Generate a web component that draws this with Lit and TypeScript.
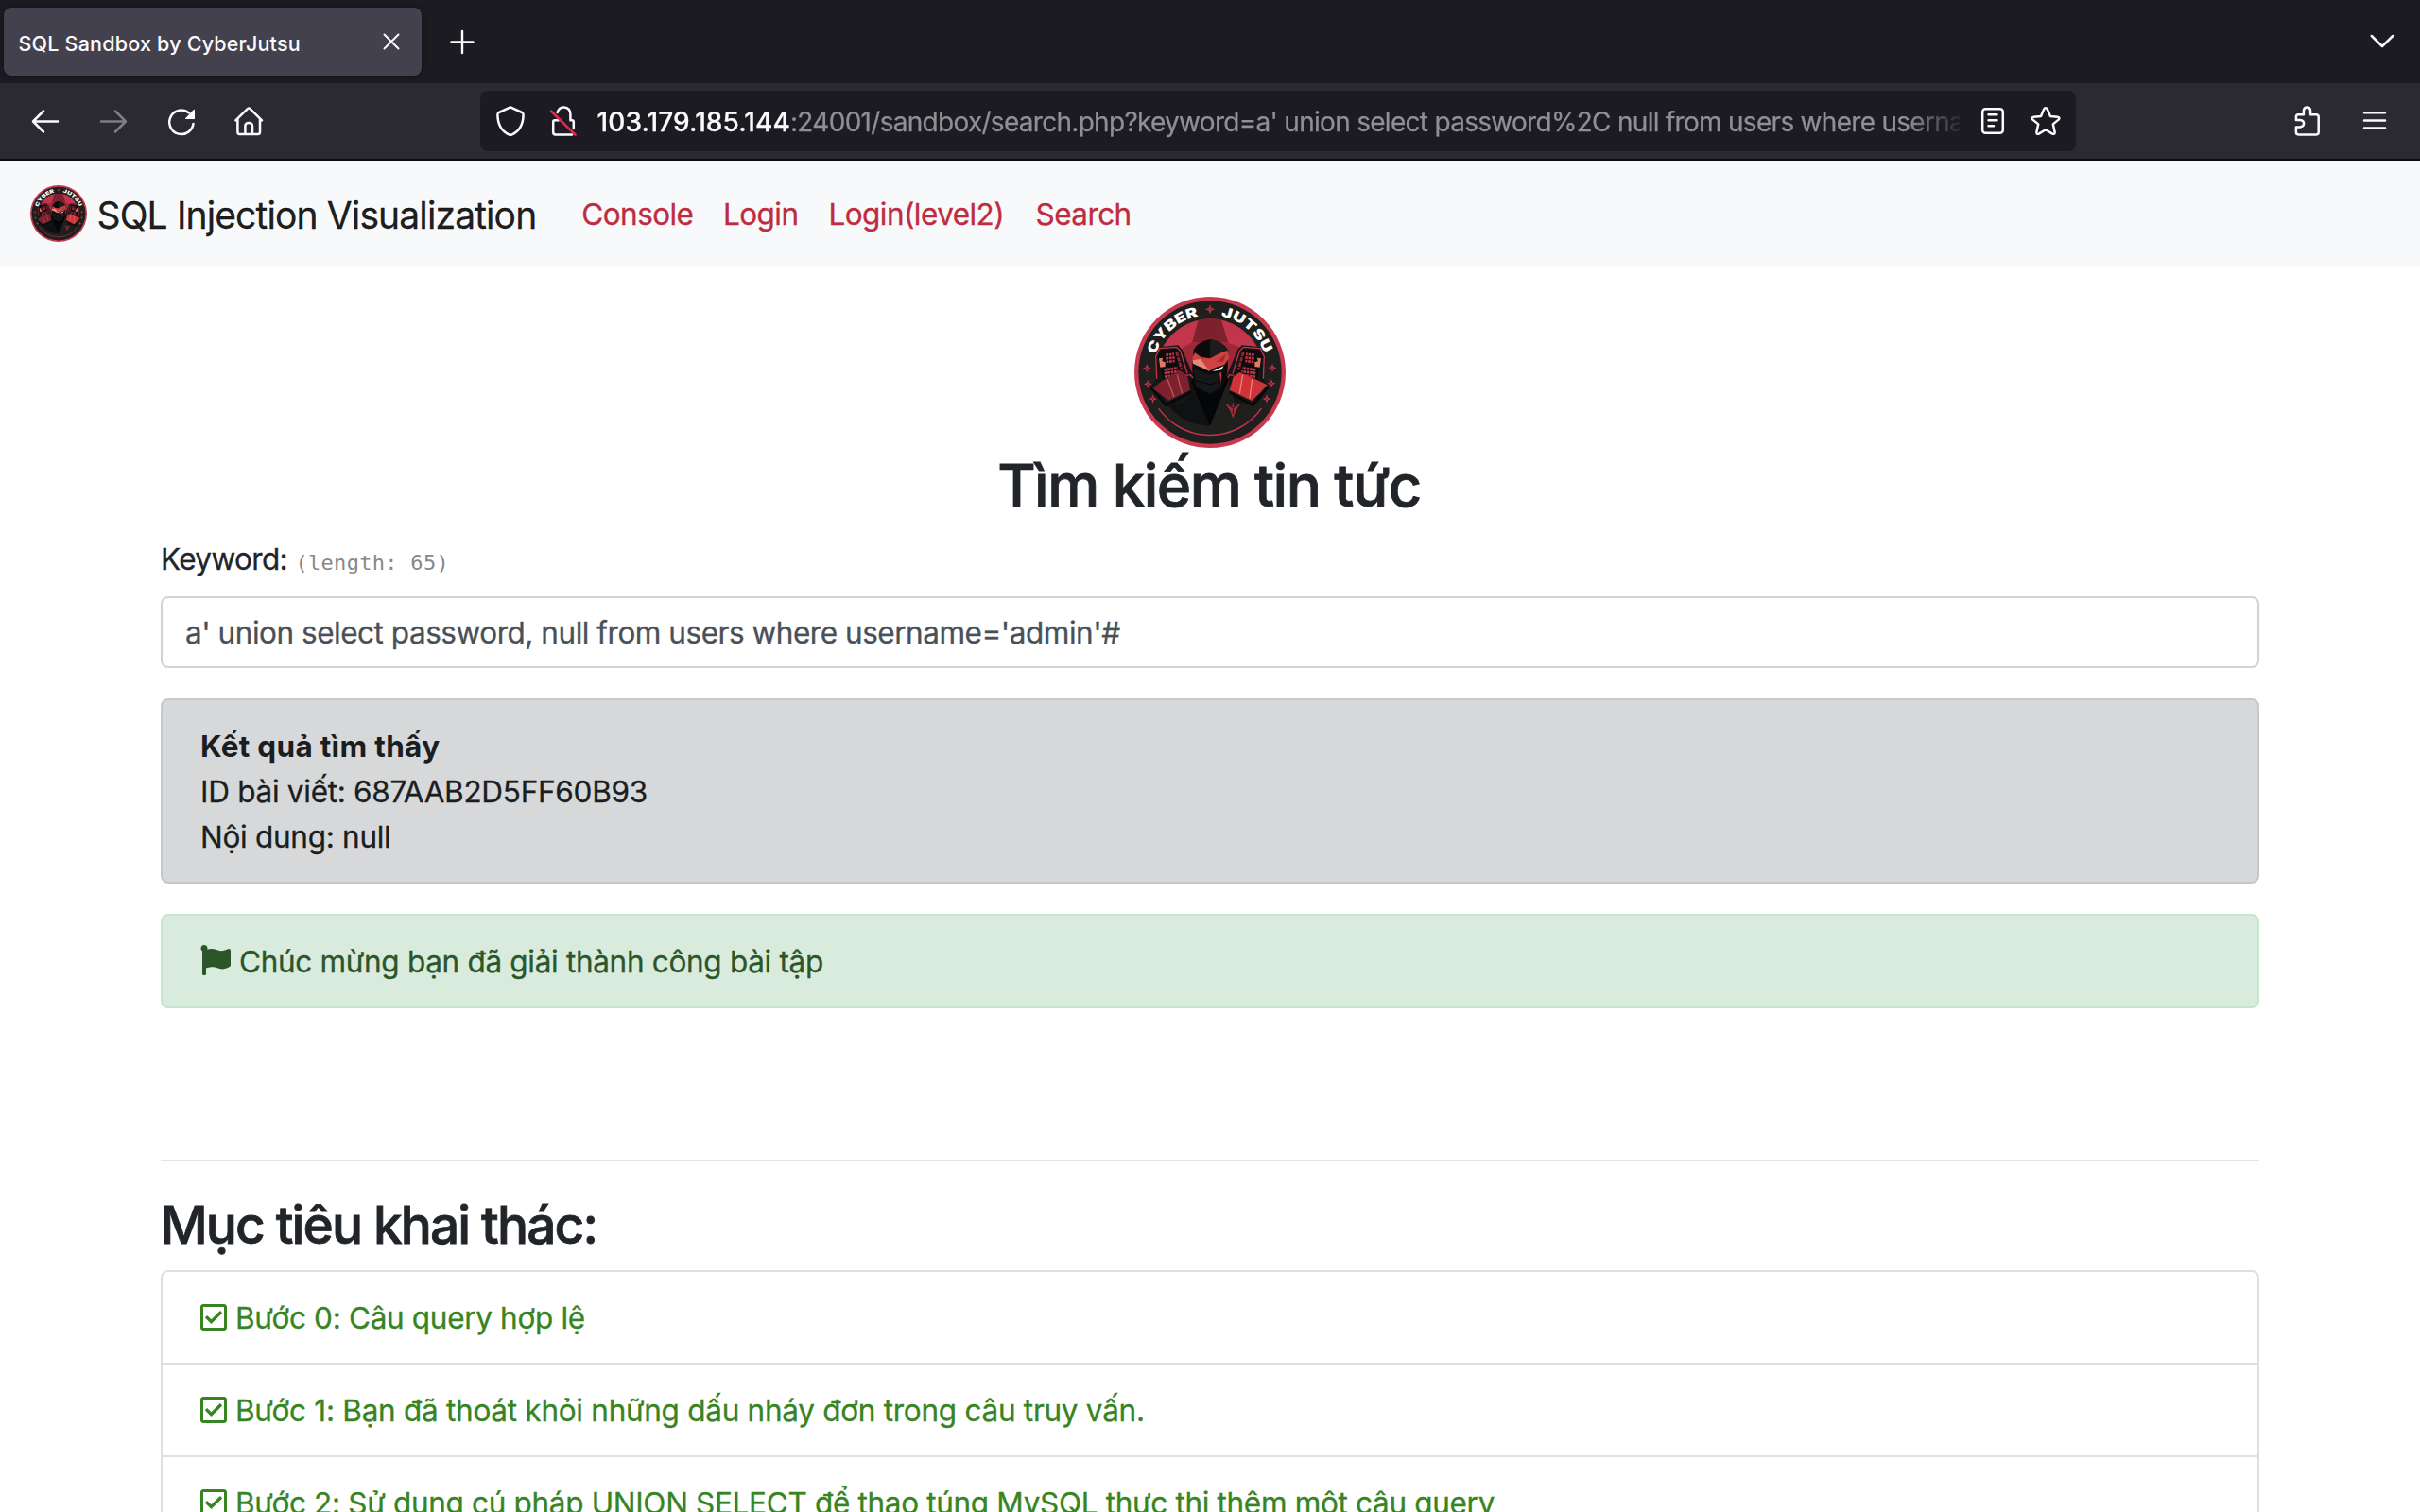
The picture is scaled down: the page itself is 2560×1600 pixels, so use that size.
import { LitElement, html, svg, css } from "lit";
import { customElement } from "lit/decorators.js";

const star4 = (x: number, y: number, r: number) => {
  const k = r * 0.26;
  return `M${x} ${y - r}L${x + k} ${y - k}L${x + r} ${y}L${x + k} ${y + k}L${x} ${y + r}L${x - k} ${y + k}L${x - r} ${y}L${x - k} ${y - k}Z`;
};

const STARS: [number, number, number][] = [
  [300, 82, 15], [100, 269, 14], [103, 319, 14], [119, 366, 14],
  [498, 268, 14], [495, 317, 14], [480, 366, 14],
];

@customElement("cyber-logo")
export class CyberLogo extends LitElement {
  static styles = css`
    :host { display: block; }
    svg { display: block; width: 100%; height: 100%; }
    .ring { font: 900 43px Inter, "Liberation Sans", sans-serif; letter-spacing: 0; fill: #fff; }
  `;

  private tablet() {
    return svg`
      <path d="M124 232 L137 202 L199 196 L212 210 L246 290 L222 378 L158 388 L112 330 L132 300 Z" fill="#151515"/>
      <path d="M131 302 L128 232 L140 206 L194 202 L206 214 L228 286" fill="none" stroke="#c2334a" stroke-width="4"/>
      <path d="M134 234 L144 212 L192 208 L213 276 L206 300 L152 306 Z" fill="#0c0c0c"/>
      <g fill="none" stroke="#c2334a" stroke-width="8" stroke-dasharray="8 2.5">
        <path d="M160 227 L186 224"/><path d="M160 238 L188 235"/><path d="M161 249 L188 246"/>
        <path d="M155 274 L198 268"/><path d="M155 285 L200 279"/><path d="M156 296 L202 290"/>
      </g>
      <path d="M194 218 L210 274" stroke="#8f2433" stroke-width="8" stroke-dasharray="14 3"/>
      <path d="M138 238 L150 236 L148 247 L158 250 L158 264 L142 266 Z" fill="#dd7a68"/>
    `;
  }

  render() {
    return html`
      <svg viewBox="60 42 480 480" role="img" aria-label="CyberJutsu">
        <defs>
          <path id="left" d="M126.9 225.8 A182 182 0 0 1 265.3 103.3"/>
          <path id="right" d="M334.7 103.3 A182 182 0 0 1 473.1 225.8"/>
          <clipPath id="disc"><circle cx="300" cy="282" r="170"/></clipPath>
        </defs>
        <circle cx="300" cy="282" r="240" fill="#c8394f"/>
        <circle cx="300" cy="282" r="227" fill="#1f1f1d"/>
        <g clip-path="url(#disc)">
          <rect x="130" y="112" width="340" height="200" fill="#c2354b"/>
          <path d="M264 110 H334 L366 215 L300 240 L236 215 Z" fill="#7c212d"/>
          <path d="M246 186 L212 204 L236 300 H364 L400 204 L352 186 Z" fill="#9c2838"/>
          <path d="M130 300 L236 280 L300 452 L180 500 L130 420 Z" fill="#0f1113"/>
          <path d="M470 300 L364 280 L300 452 L400 480 L470 420 Z" fill="#1f1f1d"/>
        </g>
        <path d="M232 286 L300 330 L366 286 L352 322 L300 453 L252 340 Z" fill="#050607"/>
        <path d="M300 177 Q262 184 248 210 L244 262 Q242 310 256 332 L298 354 L338 336 Q358 300 356 250 L358 212 Q342 184 300 177 Z" fill="#0b0b0c"/>
        <path d="M300 177 Q342 184 356 212 L300 238 Z" fill="#1c1c1d"/>
        <path d="M248 270 L300 290 L340 278 L334 330 L300 350 L256 328 Z" fill="#161719"/>
        <path d="M250 308 L300 320 L336 308" fill="none" stroke="#050607" stroke-width="3"/>
        <path d="M252 220 L272 234 L300 238 L330 222 L356 212 L360 238 L346 258 L318 266 L298 278 L246 254 L244 236 Z" fill="#d0423f"/>
        <path d="M245 244 L270 240 L298 278 L246 254 Z" fill="#e58c78"/>
        <path d="M318 250 L352 222 L342 248 Z" fill="#a82c30"/>
        <path d="M306 280 L344 262 L336 274 Z" fill="#fff"/>
        <path d="M330 284 L336 282 L336 318 Z" fill="#c2334a"/>
        ${this.tablet()}
        <g transform="translate(600 0) scale(-1 1)">${this.tablet()}</g>
        <path d="M118 332 L152 306 L204 276 L228 292 L238 338 L168 372 Z" fill="#7c212d"/>
        <path d="M482 322 L444 304 L394 282 L374 296 L362 338 L432 372 L458 348 Z" fill="#cf3238"/>
        <path d="M165 304 L186 360 M196 290 L212 350" stroke="#bd5a53" stroke-width="4"/>
        <path d="M434 304 L426 364 M404 290 L394 350" stroke="#e8866f" stroke-width="4"/>
        <path d="M112 330 L160 386 L240 344 M486 326 L436 386 L362 346" fill="none" stroke="#080808" stroke-width="7"/>
        <path d="M224 292 L238 290 L246 300 M376 292 L362 290 L356 300" fill="none" stroke="#c2334a" stroke-width="4"/>
        <path d="M373 428 L364 404 L348 380 L370 392 L373 376 L376 392 L398 380 L382 404 Z" fill="#a32b3b"/>
        <path d="M373 414 L373 396 L360 388 M373 396 L386 388" fill="none" stroke="#1f1f1d" stroke-width="3"/>
        <path d="M138 398 A199 199 0 0 0 462 398" fill="none" stroke="#c2334a" stroke-width="4.5" stroke-linecap="round"/>
        ${STARS.map(([x, y, r]) => svg`<path d=${star4(x, y, r)} fill="#c2334a"/><circle cx=${x} cy=${y} r="2.2" fill="#1f1f1d"/>`)}
        <text class="ring"><textPath href="#left" textLength="192" lengthAdjust="spacingAndGlyphs">CYBER</textPath></text>
        <text class="ring"><textPath href="#right" textLength="190" lengthAdjust="spacingAndGlyphs">JUTSU</textPath></text>
      </svg>
    `;
  }
}

const icon = (body: unknown, cls = "") => html`
  <svg class="icon ${cls}" viewBox="0 0 32 32" fill="none" stroke="#fbfbfe" stroke-width="2.5"
    stroke-linecap="round" stroke-linejoin="round">${body}</svg>`;

const ICONS = {
  close: svg`<path d="M8.5 8.5 L23.5 23.5 M23.5 8.5 L8.5 23.5" stroke-width="2"/>`,
  plus: svg`<path d="M16 5 V28 M4.5 16.5 H27.5" stroke-width="2.4"/>`,
  chevron: svg`<path d="M4.8 10 L16 21 L27.2 10"/>`,
  back: svg`<path d="M29 16.5 H3.5 M14 5.5 L3 16.5 L14 27.5"/>`,
  forward: svg`<path d="M3 16.5 H28.5 M18 5.5 L29 16.5 L18 27.5"/>`,
  reload: svg`<path d="M28.5 19 A12.7 12.7 0 1 1 24 7.5"/><path d="M29.3 4.4 V13.4 H20.8 Z" fill="#fbfbfe" stroke-width="1.4"/>`,
  home: svg`<path d="M1.4 15.3 L13.8 3.1 Q15.2 1.9 16.6 3.1 L29 15.3 M3.4 13.8 V27.8 Q3.4 30.1 5.7 30.1 H24.7 Q27 30.1 27 27.8 V13.8 M11.4 29.3 V21.3 Q11.4 17.9 15.2 17.9 Q19 17.9 19 21.3 V29.3"/>`,
  shield: svg`<path d="M16 1.4 L28.2 7 Q29.6 7.8 29.6 9.5 C29.4 20.5 24.5 27.5 17.2 30.6 Q16 31.1 14.8 30.6 C7.5 27.5 2.6 20.5 2.4 9.5 Q2.4 7.8 3.8 7 Z"/>`,
  lock: svg`<path d="M9.6 7 C11 3 14 1.4 16.5 1.6 Q23.4 2.2 23.4 9 V15.2 H25 Q26.8 15.2 26.8 17 V24 M11 15.2 H7 Q5.2 15.2 5.2 17 V28 Q5.2 30.4 7.6 30.4 H25"/>
    <path d="M3.2 5.8 L28.6 30.6" stroke="#e22850" stroke-width="2.7"/>`,
  reader: svg`<rect x="5.2" y="3.2" width="21.6" height="25.6" rx="3"/><path d="M11.5 9.2 H20.5 M11.5 15.3 H20.5 M11.5 21.3 H17"/>`,
  star: svg`<path d="M16 2.3 Q17.2 2.3 17.8 3.6 L21 11 L28.6 11.7 Q31.6 12.2 29.6 14.6 L23.8 19.4 L25.6 27.6 Q26 30.6 23.2 29.6 L16 25.2 L8.8 29.6 Q6 30.6 6.4 27.6 L8.2 19.4 L2.4 14.6 Q0.4 12.2 3.4 11.7 L11 11 L14.2 3.6 Q14.8 2.3 16 2.3 Z"/>`,
  puzzle: svg`<path d="M12.9 9.2 V5.2 Q13.1 1.4 16.5 1.4 Q19.9 1.4 20.1 5.2 V9.2 H26.3 Q28.7 9.2 28.7 11.8 V27.8 Q28.7 30.4 26.3 30.4 H7.3 Q4.9 30.4 4.9 27.8 V22.6 H9 Q13.1 21.8 13.1 18.6 Q13.1 15.6 9 15 H4.9 V11.8 Q4.9 9.2 7.3 9.2 Z"/>`,
  menu: svg`<path d="M5 7.3 H27 M5 15.5 H27 M5 23.6 H27"/>`,
};

const NAV: [string, string][] = [
  ["Console", "console"], ["Login", "login"], ["Login(level2)", "level2"], ["Search", "search"],
];

const STEPS = [
  "Bước 0: Câu query hợp lệ",
  "Bước 1: Bạn đã thoát khỏi những dấu nháy đơn trong câu truy vấn.",
  "Bước 2: Sử dụng cú pháp UNION SELECT để thao túng MySQL thực thi thêm một câu query",
];

@customElement("app-root")
export class AppRoot extends LitElement {
  static styles = css`
    :host {
      display: flex; flex-direction: column; height: 1600px; overflow: hidden; background: #fff;
      font-family: Inter, "Liberation Sans", sans-serif; color: #212529;
      font-size: 31.5px; line-height: 48px; letter-spacing: -0.3px;
    }
    * { box-sizing: border-box; }
    .icon { display: block; width: 32px; height: 32px; flex: none; overflow: visible; }
    .dim { opacity: 0.4; }

    .tabs { flex: none; height: 88px; background: #1c1b22; display: flex; align-items: center; padding: 0 24px 0 4px; }
    .tab {
      width: 442px; height: 72px; border-radius: 8px; background: #42414d; color: #fbfbfe;
      box-shadow: 0 0 5px rgba(0, 0, 0, 0.5);
      display: flex; align-items: center; justify-content: space-between; padding: 0 16px 0 15.5px;
      font-size: 21.5px; font-weight: 500; letter-spacing: 0.2px;
    }
    .tab-title { padding-top: 4px; }
    .plus { margin-left: 27px; }
    .grow { flex: 1; }

    .toolbar {
      flex: none; height: 82px; background: #2b2a33; border-bottom: 2px solid #0c0c0d;
      display: flex; align-items: center; padding: 0 32px;
    }
    .buttons { display: flex; gap: 40px; width: 476px; }
    .url {
      width: 1688px; height: 64px; border-radius: 8px; background: #1c1b22; flex: none;
      display: flex; align-items: center; padding: 0 16px;
    }
    .url .lock { margin: 0 19.5px 0 24px; }
    .address {
      width: 1445px; white-space: nowrap; overflow: hidden; font-size: 28px; color: #8f8f94;
      letter-spacing: -0.71px; padding-top: 2px; margin-right: 19.5px;
      -webkit-text-stroke: 0.25px currentColor;
      -webkit-mask-image: linear-gradient(to left, rgba(0, 0, 0, 0.12) 0, #000 56px);
      mask-image: linear-gradient(to left, rgba(0, 0, 0, 0.12) 0, #000 56px);
    }
    .host { color: #fbfbfe; font-weight: 500; letter-spacing: 0.09px; }
    .url .star { margin-left: 24px; }
    .right { display: flex; gap: 40px; }

    .navbar {
      flex: none; height: 112px; background: #f8f9fb; display: flex; align-items: center; padding: 0 32px;
    }
    .brand-logo { width: 60px; height: 60px; margin-right: 10.5px; }
    .brand {
      font-size: 39px; letter-spacing: -0.87px; color: rgba(0, 0, 0, 0.9); width: 512.8px; white-space: nowrap;
      padding-top: 3px; -webkit-text-stroke: 0.3px currentColor;
    }
    .link { color: #bf2b3f; letter-spacing: -0.56px; white-space: nowrap; padding-top: 2px; -webkit-text-stroke: 0.3px currentColor; }
    .console { width: 149.7px; }
    .login { width: 111.5px; }
    .level2 { width: 219px; }

    .main {
      width: 2220px; margin: 0 auto; padding-top: 32px; display: flex; flex-direction: column;
      -webkit-text-stroke: 0.3px currentColor;
    }
    .hero { width: 160px; height: 160px; align-self: center; -webkit-text-stroke: 0; }
    .brand-logo { -webkit-text-stroke: 0; }
    h1, h2 { margin: 0; font-weight: 500; -webkit-text-stroke: 0.8px currentColor; }
    h1 { font-size: 62px; line-height: 76px; letter-spacing: -1.57px; text-align: center; padding: 2px 2px 0 0; }
    .label { padding-top: 16px; display: flex; align-items: baseline; letter-spacing: -0.65px; }
    .count {
      font: 22px "DejaVu Sans Mono", monospace; letter-spacing: 0.3px; color: #888; margin-left: 8.5px;
      -webkit-text-stroke: 0;
    }
    .input {
      margin-top: 15px; height: 76px; border: 2px solid #ced4da; border-radius: 8px;
      padding: 13px 24px 11px; color: #495057; letter-spacing: -0.47px;
    }
    .card { margin-top: 32px; border: 2px solid; border-radius: 8px; padding: 25px 40px 23px; }
    .result { background: #d7d8da; border-color: #c6c8ca; color: #1b1e21; letter-spacing: -0.28px; }
    .bold { font-weight: 700; letter-spacing: 0.3px; -webkit-text-stroke: 0; }
    .success {
      background: #d9ebdc; border-color: #c5e5cc; color: #2a562a; letter-spacing: -0.31px;
      display: flex; gap: 9px;
    }
    .flag { width: 32px; height: 32px; margin-top: 6px; }
    hr { width: 100%; margin: 160px 0 0; border: 0; border-top: 2px solid #e5e5e5; }
    h2 { font-size: 55px; line-height: 67px; letter-spacing: -1.88px; padding-top: 34px; margin-left: -0.5px; }
    .list { margin-top: 14px; border: 2px solid #dfdfdf; border-radius: 8px; }
    .item {
      padding: 25px 40px 23px; height: 98px; border-bottom: 2px solid #dfdfdf; color: #378422;
      display: flex; gap: 9px; white-space: nowrap; letter-spacing: -0.32px;
    }
    .item:nth-child(2) { letter-spacing: -0.27px; }
    .check { width: 28px; height: 28px; margin-top: 9px; }
  `;

  render() {
    return html`
      <div class="tabs">
        <div class="tab"><span class="tab-title">SQL Sandbox by CyberJutsu</span>${icon(ICONS.close)}</div>
        ${icon(ICONS.plus, "plus")}
        <span class="grow"></span>
        ${icon(ICONS.chevron)}
      </div>
      <div class="toolbar">
        <div class="buttons">
          ${icon(ICONS.back)}${icon(ICONS.forward, "dim")}${icon(ICONS.reload)}${icon(ICONS.home)}
        </div>
        <div class="url">
          ${icon(ICONS.shield)}${icon(ICONS.lock, "lock")}
          <div class="address"><span class="host">103.179.185.144</span>:24001/sandbox/search.php?keyword=a' union select password%2C null from users where userna</div>
          ${icon(ICONS.reader)}${icon(ICONS.star, "star")}
        </div>
        <span class="grow"></span>
        <div class="right">${icon(ICONS.puzzle)}${icon(ICONS.menu)}</div>
      </div>
      <div class="navbar">
        <cyber-logo class="brand-logo"></cyber-logo>
        <span class="brand">SQL Injection Visualization</span>
        ${NAV.map(([label, cls]) => html`<span class="link ${cls}">${label}</span>`)}
      </div>
      <div class="main">
        <cyber-logo class="hero"></cyber-logo>
        <h1>Tìm kiếm tin tức</h1>
        <div class="label"><span>Keyword:</span><span class="count">(length: 65)</span></div>
        <div class="input">a' union select password, null from users where username='admin'#</div>
        <div class="card result">
          <div class="bold">Kết quả tìm thấy</div>
          <div>ID bài viết: 687AAB2D5FF60B93</div>
          <div>Nội dung: null</div>
        </div>
        <div class="card success">
          <svg class="flag" viewBox="0 0 512 512" fill="#2a562a"><path d="M349.565 98.783C295.978 98.783 251.721 64 184.348 64c-24.955 0-47.309 4.384-68.045 12.013a55.947 55.947 0 0 0 3.586-23.562C118.117 24.015 94.806 1.206 66.338.048 34.345-1.254 8 24.296 8 56c0 19.026 9.497 35.825 24 45.945V488c0 13.255 10.745 24 24 24h16c13.255 0 24-10.745 24-24v-94.4c28.311-12.064 63.582-22.122 114.435-22.122 53.588 0 97.844 34.783 165.217 34.783 48.169 0 86.667-16.294 122.505-40.858C506.84 359.452 512 349.571 512 339.045v-243.1c0-23.393-24.269-38.87-45.485-29.016-34.338 15.948-76.454 31.854-116.95 31.854z"/></svg>
          <span>Chúc mừng bạn đã giải thành công bài tập</span>
        </div>
        <hr />
        <h2>Mục tiêu khai thác:</h2>
        <div class="list">
          ${STEPS.map((s) => html`
            <div class="item">
              <svg class="check" viewBox="0 0 448 448" fill="#378422"><path d="M400 0H48C21.49 0 0 21.49 0 48v352c0 26.51 21.49 48 48 48h352c26.51 0 48-21.49 48-48V48c0-26.51-21.49-48-48-48zm0 400H48V48h352v352zm-35.864-241.724L191.547 329.48c-4.705 4.667-12.303 4.637-16.97-.068l-90.781-91.516c-4.667-4.705-4.637-12.303.069-16.971l22.719-22.536c4.705-4.667 12.303-4.637 16.97.069l59.792 60.277 141.352-140.216c4.705-4.667 12.303-4.637 16.97.068l22.536 22.718c4.667 4.706 4.637 12.304-.068 16.971z"/></svg>
              <span>${s}</span>
            </div>`)}
        </div>
      </div>
    `;
  }
}
